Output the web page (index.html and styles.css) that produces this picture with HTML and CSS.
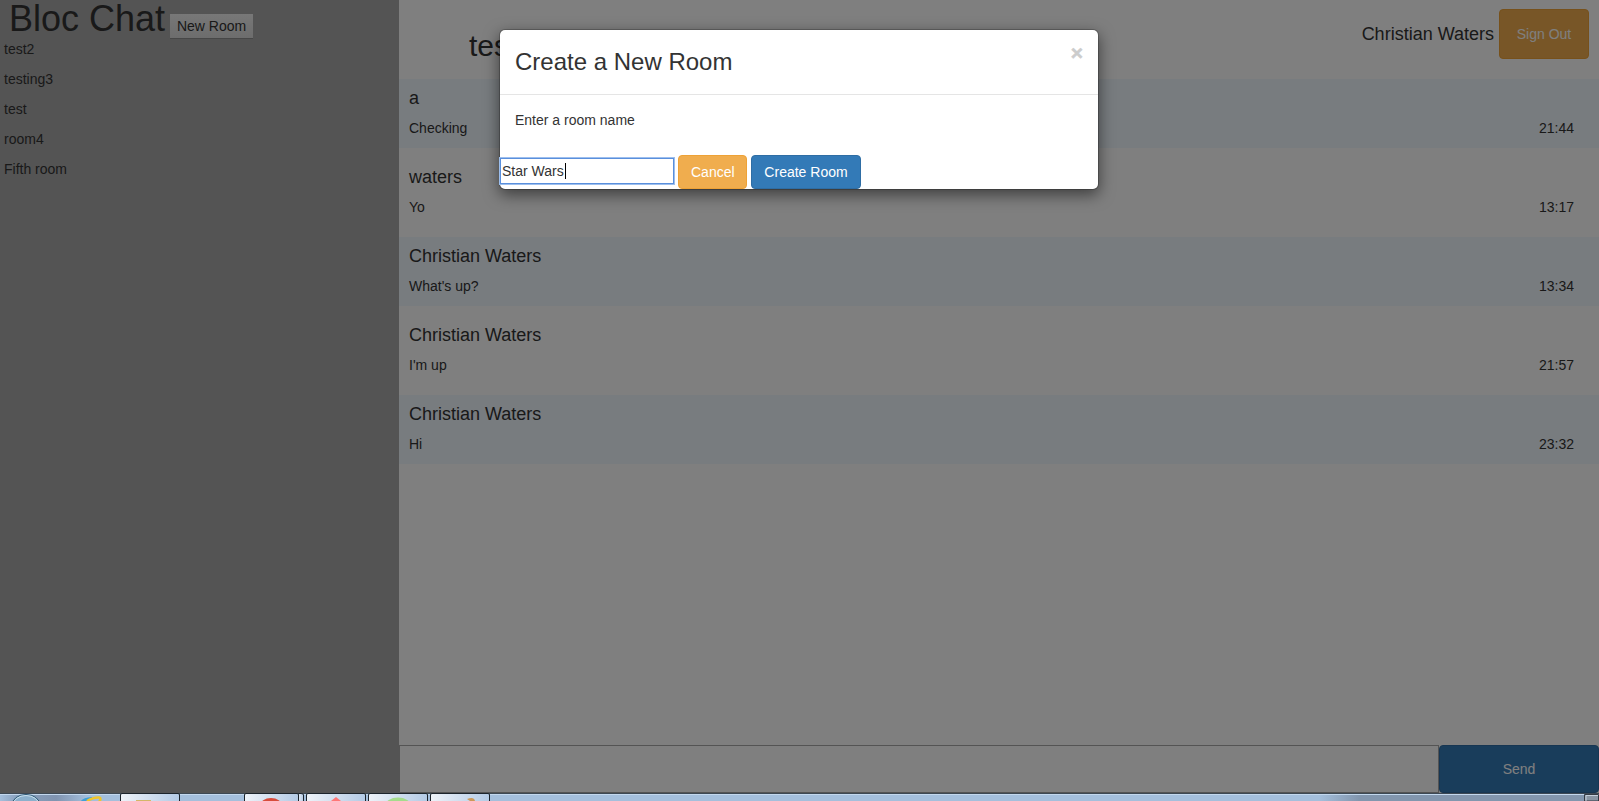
FILE: index.html
```
<!DOCTYPE html>
<html lang="en">
<head>
<meta charset="utf-8">
<title>Bloc Chat</title>
<link rel="stylesheet" href="styles.css">
</head>
<body>
<div class="screen">
  <div class="app">
    <aside class="sidebar">
      <div class="brand"><h1>Bloc Chat</h1><button class="new-room">New Room</button></div>
      <ul class="rooms">
        <li>test2</li><li>testing3</li><li>test</li><li>room4</li><li>Fifth room</li>
      </ul>
    </aside>
    <main class="chat">
      <header class="chat-head">
        <h2>test2</h2>
        <div class="user"><span>Christian Waters</span><button class="btn warning sign-out">Sign Out</button></div>
      </header>
      <section class="messages">
        <article class="message"><h4>a</h4><div class="line"><span>Checking</span><time>21:44</time></div></article>
        <article class="message"><h4>waters</h4><div class="line"><span>Yo</span><time>13:17</time></div></article>
        <article class="message"><h4>Christian Waters</h4><div class="line"><span>What's up?</span><time>13:34</time></div></article>
        <article class="message"><h4>Christian Waters</h4><div class="line"><span>I'm up</span><time>21:57</time></div></article>
        <article class="message"><h4>Christian Waters</h4><div class="line"><span>Hi</span><time>23:32</time></div></article>
      </section>
      <footer class="composer"><div class="compose-input"></div><button class="btn primary send">Send</button></footer>
    </main>
  </div>
  <div class="backdrop">
    <div class="modal">
      <div class="modal-head"><h3>Create a New Room</h3><span class="close">×</span></div>
      <div class="modal-body">Enter a room name</div>
      <div class="modal-form">
        <div class="name-input">Star Wars<i class="caret"></i></div>
        <button class="btn warning cancel">Cancel</button>
        <button class="btn primary create">Create Room</button>
      </div>
    </div>
  </div>
  <div class="taskbar">
    <svg width="1599" height="8" viewBox="0 0 1599 8">
      <defs>
        <linearGradient id="bar"><stop offset="0" stop-color="#a4bfdc"/><stop offset=".01" stop-color="#8ba3c0"/><stop offset=".035" stop-color="#8094b0"/><stop offset=".055" stop-color="#a4bfdc"/><stop offset=".825" stop-color="#a4bfdc"/><stop offset=".85" stop-color="#8296ae"/><stop offset="1" stop-color="#8296ae"/></linearGradient>
        <linearGradient id="tab"><stop offset="0" stop-color="#eef3f9"/><stop offset="1" stop-color="#b3cae5"/></linearGradient>
      </defs>
      <rect width="1599" height="8" fill="url(#bar)"/>
      <rect width="1599" height="1" fill="#3c4854"/>
      <rect y="1" width="1599" height="1" fill="#c3d8ee"/>
      <ellipse cx="26" cy="12" rx="14" ry="10.5" fill="#8bb0cc" stroke="#2c5873"/>
      <ellipse cx="26" cy="12" rx="13" ry="9.5" fill="none" stroke="#c9e0ee"/>
      <path d="M82 9Q84 6 92 5.500" fill="none" stroke="#3fa0d8" stroke-width="3"/>
      <path d="M87 8Q94 4 99 4.500Q102 5 99 9" fill="none" stroke="#f0c52b" stroke-width="2.500"/>
      <g fill="url(#tab)" stroke="#1c242c">
        <path d="M120.500 9V2Q120.500 .5 122 .5H178Q179.500 .5 179.500 2V9z"/>
        <path d="M297.500 9V2Q297.500 .5 299 .5H301Q303.500 .5 303.500 2V9z"/>
        <path d="M244.500 9V2Q244.500 .5 246 .5H297Q298.500 .5 298.500 2V9z"/>
        <path d="M306.500 9V2Q306.500 .5 308 .5H364Q365.500 .5 365.500 2V9z"/>
        <path d="M368.500 9V2Q368.500 .5 370 .5H426Q427.500 .5 427.500 2V9z"/>
        <path d="M430.500 9V2Q430.500 .5 432 .5H488Q489.500 .5 489.500 2V9z"/>
      </g>
      <path d="M136 8V7H151V8z" fill="#d4b668"/>
      <ellipse cx="271" cy="13" rx="11" ry="8" fill="#d84c3c"/>
      <path d="M331 8L336 4L341 8z" fill="#ff7777"/>
      <ellipse cx="398" cy="13" rx="13" ry="8.500" fill="#a4dc8c"/>
      <path d="M467 6Q474 3 475 8H470z" fill="#cd9958"/>
      <path d="M1584.500 8V1.500H1598.500V8z" fill="#8995a3" stroke="#343b44"/>
      <path d="M1586 8V2.500H1598" fill="none" stroke="#c4d0dc"/>
    </svg>
  </div>
</div>
</body>
</html>
```
FILE: styles.css
```
* { box-sizing: border-box; }
body { margin: 0; font: 14px/20px "Liberation Sans", Arial, sans-serif; color: #333; }
h1, h2, h3, h4, ul { margin: 0; padding: 0; font-weight: 400; }
button { font: inherit; }
.screen { position: relative; width: 1599px; height: 801px; overflow: hidden; display: flex; flex-direction: column; background: #fff; }
.app { flex: 1; display: flex; min-height: 0; }
.sidebar { width: 399px; background: #a8a8a8; }
.brand { height: 39px; padding-left: 9px; display: flex; align-items: flex-start; gap: 5px; }
h1 { font-size: 36px; line-height: 38px; white-space: nowrap; }
.new-room { height: 24px; width: 83px; margin-top: 14px; padding: 0; border: 0; color: #333; background: linear-gradient(#f0f0f0, #dadada); box-shadow: 0 1px 0 #8e8e8e; line-height: 24px; }
.rooms { list-style: none; padding-left: 4px; }
.rooms li { margin-bottom: 10px; }
.chat { flex: 1; display: flex; flex-direction: column; }
.chat-head { height: 79px; padding: 9px 10px 0 70px; display: flex; justify-content: space-between; align-items: flex-start; }
h2 { font-size: 30px; line-height: 33px; margin-top: 20px; }
.user { display: flex; align-items: center; gap: 5px; font-size: 18px; }
.btn { height: 34px; padding: 0 12px; border: 1px solid; border-radius: 4px; color: #fff; font-size: 14px; }
.warning { background: #f0ad4e; border-color: #eea236; }
.primary { background: #337ab7; border-color: #2e6da4; }
.sign-out { width: 90px; height: 50px; }
.cancel { width: 69px; }
.create { width: 110px; }
.messages { flex: 1; display: flex; flex-direction: column; gap: 10px; }
.message { height: 69px; padding: 9px 25px 0 10px; }
.message:nth-child(odd) { background: #f0f8ff; }
h4 { font-size: 18px; line-height: 20px; margin-bottom: 10px; }
.line { display: flex; justify-content: space-between; }
.composer { height: 48px; display: flex; }
.compose-input { flex: 1; border: 1px solid #a9a9a9; }
.send { width: 160px; height: 48px; }
.backdrop { position: absolute; inset: 0 0 8px; background: rgba(0, 0, 0, .5); }
.modal { width: 600px; height: 161px; margin: 29px 0 0 499px; background: #fff; background-clip: padding-box; border: 1px solid rgba(0, 0, 0, .2); border-radius: 6px; box-shadow: 0 5px 15px rgba(0, 0, 0, .5); }
.modal-head { height: 65px; padding: 16px 15px 0; display: flex; justify-content: space-between; border-bottom: 1px solid #e5e5e5; }
h3 { font-size: 24px; line-height: 32px; }
.close { font-size: 21px; line-height: 21px; font-weight: 700; color: #ccc; -webkit-text-stroke: .5px #ccc; margin-top: -4px; }
.modal-body { height: 60px; padding: 15px; }
.modal-form { display: flex; gap: 4px; }
.name-input { display: flex; align-items: center; width: 174px; height: 26px; margin-top: 3px; padding-left: 1px; border: 1px solid #5a8fdc; box-shadow: 0 0 0 1px #9dbfee; }
.caret { width: 1px; height: 16px; margin-left: 1px; background: #000; }
.taskbar { height: 8px; }
.taskbar svg { display: block; }
```
